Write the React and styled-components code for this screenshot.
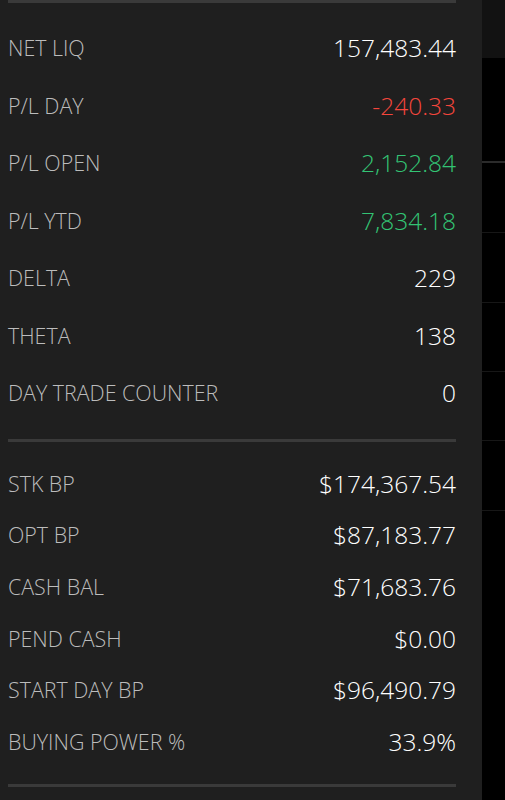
import React from 'react'
import styled, { createGlobalStyle } from 'styled-components';

const GlobalStyle = createGlobalStyle`
  html, body {
    margin: 0;
    padding: 0;
    background: #000;
  }
  body {
    font-family: "Open Sans", "Liberation Sans", sans-serif;
  }
`

const summary = [
    { label: 'NET LIQ', value: '157,483.44' },
    { label: 'P/L DAY', value: '-240.33', tone: 'down' },
    { label: 'P/L OPEN', value: '2,152.84', tone: 'up' },
    { label: 'P/L YTD', value: '7,834.18', tone: 'up' },
    { label: 'DELTA', value: '229' },
    { label: 'THETA', value: '138' },
    { label: 'DAY TRADE COUNTER', value: '0' },
];

const power = [
    { label: 'STK BP', value: '$174,367.54' },
    { label: 'OPT BP', value: '$87,183.77' },
    { label: 'CASH BAL', value: '$71,683.76' },
    { label: 'PEND CASH', value: '$0.00' },
    { label: 'START DAY BP', value: '$96,490.79' },
    { label: 'BUYING POWER %', value: '33.9%' },
];

const sideRows = [105, 70, 70, 69, 69, 70];

const App = () => {
    return (
        <Page>
            <GlobalStyle />
            <Panel>
                <Divider />
                <Group>
                    {summary.map(item => (
                        <Row key={item.label} tall>
                            <Label>{item.label}</Label>
                            <Value tone={item.tone}>{item.value}</Value>
                        </Row>
                    ))}
                </Group>
                <Divider />
                <Group>
                    {power.map(item => (
                        <Row key={item.label}>
                            <Label>{item.label}</Label>
                            <Value>{item.value}</Value>
                        </Row>
                    ))}
                </Group>
                <Divider />
            </Panel>
            <Side>
                <SideHeader />
                {sideRows.map((h, i) => (
                    <SideRow key={i} first={i === 0} style={{ height: h }} />
                ))}
            </Side>
        </Page>
    )
}

export default App

const Page = styled.div`
    display: flex;
    width: 505px;
    height: 800px;
    overflow: hidden;
    background: #000;
`
const Panel = styled.div`
    width: 482px;
    flex-shrink: 0;
    background: #1f1f1f;
    padding: 0 26px 0 8px;
    box-sizing: border-box;
`
const Divider = styled.div`
    height: 3px;
    background: #3a3a3a;
`
const Group = styled.div`
    display: flex;
    flex-direction: column;
    padding: 16px 0 17px;
`
const Row = styled.div`
    display: flex;
    align-items: center;
    justify-content: space-between;
    height: ${p => p.tall ? '57.5px' : '51.6px'};
`
const Label = styled.span`
    font-size: 21.4px;
    font-weight: 300;
    color: #bcbcbc;
`
const Value = styled.span`
    font-size: 24.5px;
    font-weight: 300;
    color: ${p => p.tone === 'down' ? '#f4463c' : p.tone === 'up' ? '#33c474' : '#ffffff'};
`
const Side = styled.div`
    flex: 1;
    display: flex;
    flex-direction: column;
`
const SideHeader = styled.div`
    height: 58px;
    background: #121212;
`
const SideRow = styled.div`
    box-sizing: border-box;
    border-bottom: ${p => p.first ? '2px solid #2b2b2b' : '1px solid #171717'};
`
